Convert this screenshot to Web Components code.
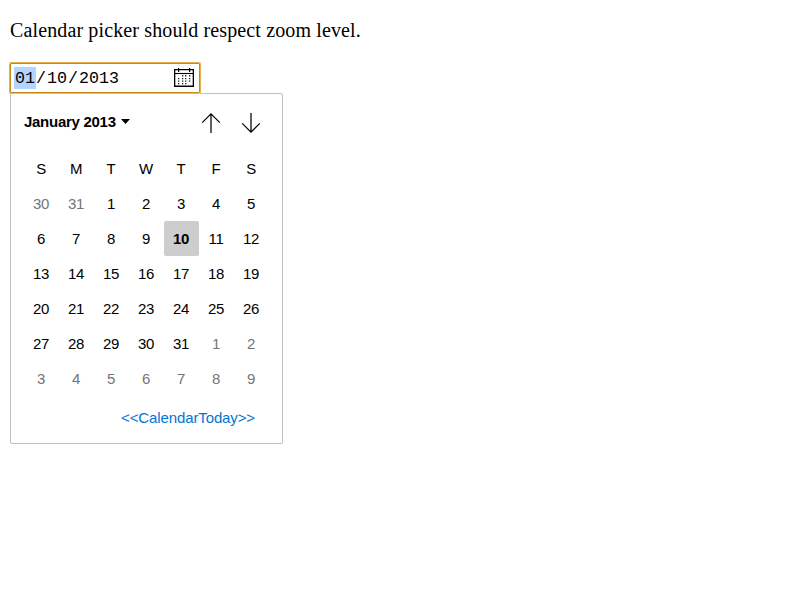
<!DOCTYPE html>
<html lang="en">
<head>
<meta charset="utf-8">
<title>Calendar picker</title>
<style>
body { margin: 0; background: #fff; color: #000; font: 20px "Liberation Serif", serif; }
</style>
</head>
<body>
<zoom-page>
  <date-field slot="field" month="01" day="10" year="2013"></date-field>
  <calendar-picker slot="picker" label="January 2013" selected="10"></calendar-picker>
</zoom-page>
<script>
class ZoomPage extends HTMLElement {
  constructor() {
    super();
    this.attachShadow({ mode: 'open' }).innerHTML = `
      <style>
        :host { display: flex; flex-direction: column; align-items: flex-start; padding: 19px 10px 0; }
        p { margin: 0; height: 44px; line-height: 22px; white-space: nowrap; letter-spacing: 0.13px; }
      </style>
      <p>Calendar picker should respect zoom level.</p>
      <slot name="field"></slot>
      <slot name="picker"></slot>`;
  }
}

class DateField extends HTMLElement {
  constructor() {
    super();
    const part = n => this.getAttribute(n);
    this.attachShadow({ mode: 'open' }).innerHTML = `
      <style>
        :host { display: flex; align-items: center; box-sizing: border-box; width: 190px; height: 30px;
          padding: 0 5px 0 3px; border: 1px solid #c98a15; border-radius: 1px;
          box-shadow: 0 0 0 1px #e8b04c; font: 16.667px/20px "Liberation Mono", monospace; }
        span { padding: 2px 1px 0; }
        .sep { padding: 2px 0 0; }
        .on { background: #b3d4ff; }
        svg { margin: 0 0 1px auto; }
      </style>
      <span class="on">${part('month')}</span><span class="sep">/</span><span>${part('day')}</span><span class="sep">/</span><span>${part('year')}</span>
      <svg width="20" height="19" viewBox="0 0 20 19">
        <path d="M.65 1.65h18.7v16.6H.65z" fill="#fff" stroke="#000" stroke-width="1.3"/>
        <path d="M1 5.5h18" stroke="#000" stroke-width="1.1"/>
        <path d="M4 0h1.2v4H4zM15 0h1.2v4H15z"/>
        <path d="M8 7h1.3v1.4H8zM11 7h1.3v1.4H11zM15 7h1.3v1.4H15z
          M4 10h1.3v1.3H4zM8 10h1.3v1.3H8zM11 10h1.3v1.3H11zM15 10h1.3v1.3H15z
          M4 12.5h1.3v1.3H4zM8 12.5h1.3v1.3H8zM11 12.5h1.3v1.3H11zM15 12.5h1.3v1.3H15z
          M4 15h1.3v1.3H4zM8 15h1.3v1.3H8zM11 15h1.3v1.3H11z" fill="#222"/>
      </svg>`;
  }
}

class ArrowButton extends HTMLElement {
  constructor() {
    super();
    const turn = this.getAttribute('dir') === 'down' ? 'rotate(180 10 10)' : '';
    this.attachShadow({ mode: 'open' }).innerHTML = `
      <style>:host { display: block; width: 20px; height: 20px; } svg { display: block; }</style>
      <svg width="20" height="20" viewBox="0 0 20 20" fill="none" stroke="#000" stroke-width="1.25">
        <g transform="${turn}"><path d="M10 .8V20M1.2 9.6L10 .9l8.8 8.7"/></g>
      </svg>`;
  }
}

class CalendarPicker extends HTMLElement {
  constructor() {
    super();
    const selected = Number(this.getAttribute('selected'));
    const heads = [...'SMTWTFS'].map(d => `<b class="head">${d}</b>`).join('');
    const days = Array.from({ length: 42 }, (_, i) => {
      const n = i - 1;
      const outside = n < 1 || n > 31;
      const shown = n < 1 ? n + 31 : n > 31 ? n - 31 : n;
      const cls = outside ? 'out' : n === selected ? 'sel' : '';
      return `<span class="${cls}">${shown}</span>`;
    }).join('');
    this.attachShadow({ mode: 'open' }).innerHTML = `
      <style>
        :host { display: block; box-sizing: border-box; width: 273px; height: 351px; padding: 0 13px;
          background: #fff; border: 1px solid #bfbfbf; border-radius: 2px;
          font: 15px "Liberation Sans", sans-serif; color: #000; }
        header { display: flex; align-items: center; box-sizing: border-box; height: 57px; padding-bottom: 2px; }
        .month { font-weight: bold; letter-spacing: -0.28px; }
        .tri { margin-left: 5px; }
        nav { display: flex; gap: 20px; margin: 2px 8px 0 auto; }
        .grid { display: grid; grid-template-columns: repeat(7, 35px); grid-auto-rows: 35px; }
        .grid > * { display: flex; align-items: center; justify-content: center; padding-right: 1px;
          font-weight: normal; border-radius: 2px; letter-spacing: -0.34px; }
        .grid .out { color: #757575; }
        .grid .sel { background: #cdcdcd; font-weight: bold; }
        footer { display: flex; justify-content: flex-end; padding: 13px 14px 0 0; color: #0075d7;
          line-height: 17px; letter-spacing: -0.12px; }
      </style>
      <header>
        <span class="month">${this.getAttribute('label')}</span>
        <svg class="tri" width="9" height="5" viewBox="0 0 9 5"><path d="M0 0h9L4.5 5z"/></svg>
        <nav><arrow-button dir="up"></arrow-button><arrow-button dir="down"></arrow-button></nav>
      </header>
      <div class="grid">${heads}${days}</div>
      <footer>&lt;&lt;CalendarToday&gt;&gt;</footer>`;
  }
}

customElements.define('arrow-button', ArrowButton);
customElements.define('calendar-picker', CalendarPicker);
customElements.define('date-field', DateField);
customElements.define('zoom-page', ZoomPage);
</script>
</body>
</html>
